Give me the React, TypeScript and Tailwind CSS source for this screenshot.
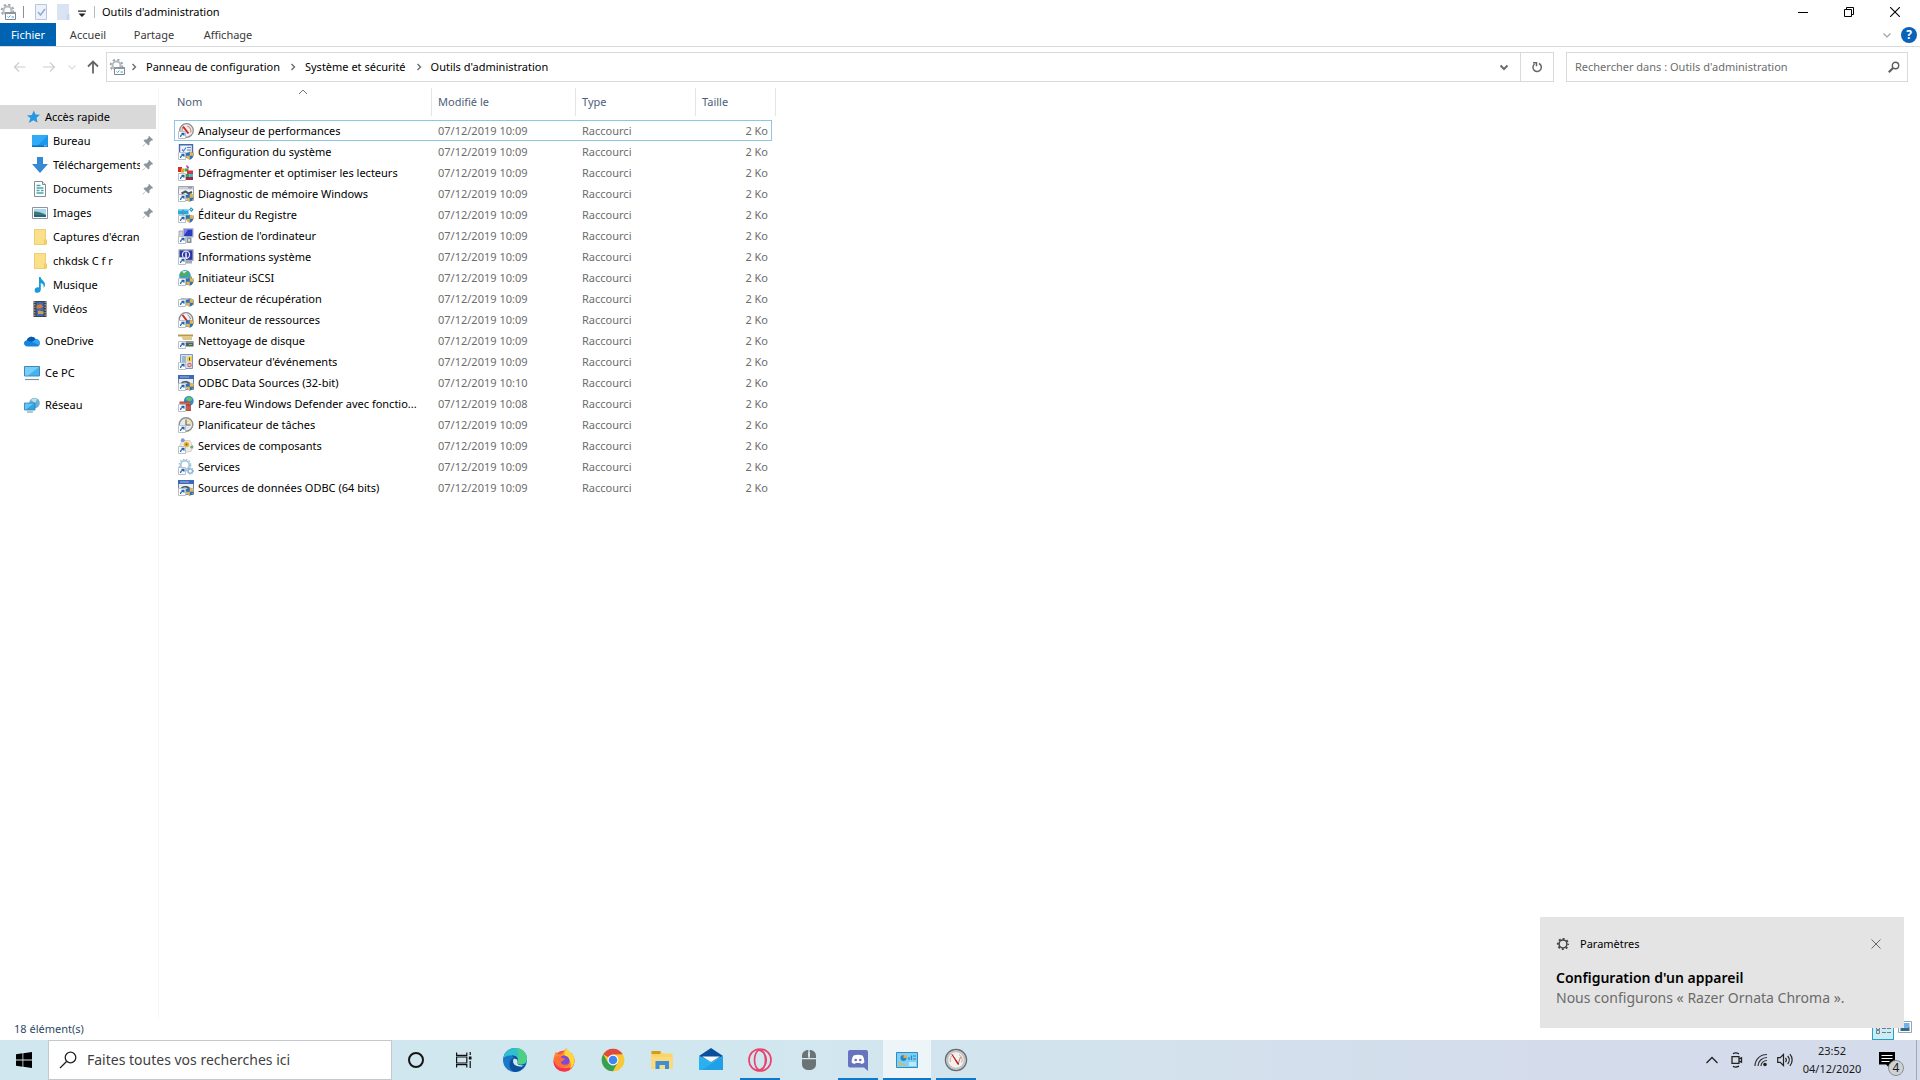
import React from "react";

const ARROW = (
  <g>
    <path d="M.5 8.500h7v7h-7z" fill="#fdfdfd" stroke="#b9c0c8" />
    <path d="M2 14c0-2 1-3 2.600-3H3.500V9.800h3v3h-1.100v-1C4 11.900 3.200 12.700 3.200 14z" fill="#1c5fae" />
  </g>
);

const SHIELD = (
  <g>
    <path d="M11.800 7.500c1 .9 2.400 1.200 4 1.200 0 3.600-1 5.900-4 7-3-1.100-4-3.400-4-7 1.600 0 3-.3 4-1.200z" fill="#2e6fc0" />
    <path d="M11.800 7.500c1 .9 2.400 1.200 4 1.200 0 1.200-.1 2.200-.4 3.100h-3.600z" fill="#e9b748" />
    <path d="M11.800 11.800v3.900c-2-.7-3.200-2-3.700-3.900z" fill="#e9b748" />
  </g>
);

type IconKind =
  | "perf" | "config" | "defrag" | "memory" | "registry" | "computer" | "info" | "iscsi" | "recovery"
  | "monitor" | "clean" | "events" | "odbc" | "firewall" | "tasks" | "components" | "services";

const BODIES: Record<IconKind, React.ReactNode> = {
  perf: (
    <g>
      <circle cx="8.500" cy="7.500" r="6.800" fill="#efeff0" stroke="#8d8f91" strokeWidth="1.300" />
      <path d="M4 8a4.600 4.600 0 0 1 1-3.500M9 3a4.800 4.800 0 0 1 3.500 6.500" fill="none" stroke="#d98c82" strokeWidth="1.200" />
      <path d="M5 3.500l5.500 7" stroke="#cf2a25" strokeWidth="2" />
    </g>
  ),
  config: (
    <g>
      <path d="M1.500.8h13v10.500h-13z" fill="#eef4fc" stroke="#4a68a8" strokeWidth="1.400" />
      <path d="M4 5.500l1.500 1.500L8 3.500M9 3.500h4M9 6h4" fill="none" stroke="#4f82cc" strokeWidth="1.200" />
      <path d="M6 12h5v2H6z" fill="#9aa4ae" />
    </g>
  ),
  defrag: (
    <g>
      <path d="M0 2h4v5H0z" fill="#dc2b2b" /><path d="M3 3.500h3v4H3z" fill="#e8a020" />
      <path d="M8 .3c2 .2 3 1.500 3.200 3L9 3.500z" fill="#c23ab0" /><path d="M6.500 3.500h4v3h-4z" fill="#3ba84a" />
      <path d="M9 5.500h6v3.500H9z" fill="#d82f4a" /><path d="M8 9h3.500v3H8z" fill="#2aa84a" /><path d="M11.500 9H15v3h-3.500z" fill="#35c1cf" /><path d="M8 12h7v3H8z" fill="#a62348" />
    </g>
  ),
  memory: (
    <g>
      <path d="M.5.500h15v14H.5z" fill="#f4f6f8" stroke="#9fa8b1" />
      <path d="M1 1h14v2.500H1z" fill="#c8d0d8" /><path d="M10 1.800h4" stroke="#7d8790" />
      <path d="M3.500 7.500l4-2 3 2 3.500-1.500" stroke="#4a525b" strokeWidth="2" fill="none" />
    </g>
  ),
  registry: (
    <g>
      <path d="M0 2.500h5v5H0zM5.500 2.500h5v5h-5zM5.500 8h5v5h-5z" fill="#28a7d8" />
      <path d="M0 2.500h10.500v1.200H0z" fill="#7fd4ef" /><path d="M13 .2l2.600 2.300L13.500 5 11 2.800z" fill="#1d8ec2" /><circle cx="13.200" cy="2.600" r=".8" fill="#c9eefa" />
      <path d="M4.800 2.500h.7v10h-.7z" fill="#146a93" />
    </g>
  ),
  computer: (
    <g>
      <path d="M1 3h4v9H1z" fill="#cfd4da" stroke="#8b939c" strokeWidth=".7" />
      <path d="M5.500.8h9.500v8H5.500z" fill="#2b3cc4" stroke="#b4bacb" strokeWidth="1.200" />
      <path d="M6.200 1.500H10L6.200 7z" fill="#7d8cf0" /><path d="M8.500 9.500h5V15h-5z" fill="#8b949c" /><path d="M10 11h2v2.500h-2z" fill="#d7dce0" />
    </g>
  ),
  info: (
    <g>
      <path d="M1 .8h14v10.500H1z" fill="#2b35a4" stroke="#a5adba" strokeWidth="1.200" />
      <circle cx="8" cy="5.800" r="3.600" fill="none" stroke="#dfe6fb" strokeWidth="1.200" />
      <path d="M8 3.500v6" stroke="#fff" strokeWidth="1.400" /><path d="M8 12h6v2.500H8z" fill="#a3abb4" />
    </g>
  ),
  iscsi: (
    <g>
      <circle cx="7" cy="6" r="5.900" fill="#3b9bdc" />
      <path d="M1.500 4.500c2-4.500 8-5 10-2L8.500 6 6 5 4 8z" fill="#4fae4d" /><path d="M4 1.500c1.500-.9 3.500-1 5-.6L6 3.500z" fill="#cbeafa" />
      <path d="M8 7.500l6-1v8.500H8z" fill="#93a54e" />
    </g>
  ),
  recovery: <path d="M1 9.500l2-2h10l2.500 2V14H1z" fill="#cdd2d6" stroke="#969da3" strokeWidth=".6" />,
  monitor: (
    <g>
      <circle cx="8" cy="7.500" r="6.800" fill="#f3f3f3" stroke="#858a8f" strokeWidth="1.300" />
      <path d="M4.500 3l5 6.500" stroke="#cf2a25" strokeWidth="2" /><path d="M9.500 3a5 5 0 0 1 3 4" stroke="#888" fill="none" />
    </g>
  ),
  clean: (
    <g>
      <path d="M0 1.500h15v2H0z" fill="#b89a4b" /><path d="M3.500 3.500H14v3.500H5z" fill="#ddc98a" />
      <path d="M6 9h9.500v4.500H6z" fill="#55605c" /><path d="M6 8h9.500v2H6z" fill="#8d9896" /><path d="M11 11h3v1h-3z" fill="#57d263" />
    </g>
  ),
  events: (
    <g>
      <path d="M2.500.5h12v14h-12z" fill="#d5e2f4" stroke="#7f98bd" />
      <path d="M4 3h4M4 5h4M4 7h4M4 9h4" stroke="#6788b8" /><path d="M9 2.500h5v5H9z" fill="#f2cf44" /><path d="M11 3.500h1v3h-1z" fill="#5c4a10" />
      <circle cx="11.500" cy="11" r="2.300" fill="#d56b67" /><path d="M10.500 10l2 2m0-2l-2 2" stroke="#fff" strokeWidth=".7" />
    </g>
  ),
  odbc: (
    <g>
      <path d="M.5.5h15v14H.5z" fill="#e9eef4" stroke="#6d87ab" /><path d="M0 0h16v4H0z" fill="#3d68b5" />
      <path d="M2 1.500h9v1H2z" fill="#9ebbea" />
      <path d="M3 7.500c3-2 7-2 9 .5l-2 1c-2-1.800-4-1.800-6-.3z" fill="#4d565f" />
    </g>
  ),
  firewall: (
    <g>
      <circle cx="10.800" cy="5" r="4.900" fill="#2f8bd0" /><path d="M7.500 3c2-3 6-2.500 7 .5L11.500 6z" fill="#5fc46a" />
      <path d="M1.500 5.500h11V9h-11zM8 9h5v6H8z" fill="#b3473a" /><path d="M1.500 7.200h11M8 11h5M8 13h5" stroke="#e6a398" strokeWidth=".5" />
    </g>
  ),
  tasks: (
    <g>
      <circle cx="8" cy="7.500" r="6.800" fill="#e7e9ec" stroke="#8c9094" strokeWidth="1.400" />
      <path d="M8 7.500V2a5.500 5.500 0 0 1 5.500 5.500z" fill="#f3dfa4" /><path d="M8 2.500v5.500h4.500" stroke="#5d656d" fill="none" strokeWidth="1.100" />
    </g>
  ),
  components: (
    <g>
      <path d="M4 2.500h8l3 6-2 5-7 1-5-5z" fill="#eceae2" stroke="#c5c3b8" strokeWidth=".7" />
      <circle cx="4.800" cy="2.200" r="2" fill="#8a95d8" /><circle cx="8.500" cy="6.500" r="2.700" fill="#eab52c" /><circle cx="8.500" cy="6.500" r="1" fill="#7d5c10" />
      <circle cx="13.800" cy="9" r="1.600" fill="#64b175" />
    </g>
  ),
  services: (
    <g>
      <circle cx="7" cy="6" r="4.300" fill="none" stroke="#9cc3de" strokeWidth="1.600" />
      <circle cx="7" cy="6" r="5.700" fill="none" stroke="#9cc3de" strokeWidth="1.400" strokeDasharray="1.600 1.400" />
      <circle cx="12.300" cy="12" r="2.200" fill="none" stroke="#8cb4d4" strokeWidth="1.300" />
      <circle cx="12.300" cy="12" r="3.300" fill="none" stroke="#8cb4d4" strokeDasharray="1.200 1.200" />
    </g>
  ),
};

const FileIcon = ({ kind, shield }: { kind: IconKind; shield?: boolean }) => (
  <svg viewBox="0 0 16 16" className="h-4 w-4 shrink-0" aria-hidden="true">
    {BODIES[kind]}
    {shield && SHIELD}
    {ARROW}
  </svg>
);

const FILES: { name: string; time?: string; icon: IconKind; shield?: boolean }[] = [
  { name: "Analyseur de performances", icon: "perf" },
  { name: "Configuration du système", icon: "config", shield: true },
  { name: "Défragmenter et optimiser les lecteurs", icon: "defrag" },
  { name: "Diagnostic de mémoire Windows", icon: "memory", shield: true },
  { name: "Éditeur du Registre", icon: "registry", shield: true },
  { name: "Gestion de l'ordinateur", icon: "computer" },
  { name: "Informations système", icon: "info" },
  { name: "Initiateur iSCSI", icon: "iscsi", shield: true },
  { name: "Lecteur de récupération", icon: "recovery", shield: true },
  { name: "Moniteur de ressources", icon: "monitor", shield: true },
  { name: "Nettoyage de disque", icon: "clean" },
  { name: "Observateur d'événements", icon: "events" },
  { name: "ODBC Data Sources (32-bit)", time: "10:10", icon: "odbc", shield: true },
  { name: "Pare-feu Windows Defender avec fonctio...", time: "10:08", icon: "firewall" },
  { name: "Planificateur de tâches", icon: "tasks" },
  { name: "Services de composants", icon: "components" },
  { name: "Services", icon: "services" },
  { name: "Sources de données ODBC (64 bits)", icon: "odbc", shield: true },
];

const AdminIcon = () => (
  <svg viewBox="0 0 16 16" className="h-4 w-4 shrink-0" aria-hidden="true">
    <circle cx="7.500" cy="6.500" r="4" fill="none" stroke="#b4babf" strokeWidth="2" />
    <circle cx="7.500" cy="6.500" r="5.900" fill="none" stroke="#9da4aa" strokeWidth="1.800" strokeDasharray="2.300 2.330" />
    <path d="M5.500 8.500h10v7h-10z" fill="#fff" stroke="#7e868d" />
    <path d="M5 8h11v2H5z" fill="#8e969d" />
    <path d="M7.500 12.500l1 1L10.500 11.500M11.500 13h2.500" fill="none" stroke="#3d9fd8" />
  </svg>
);

const Pin = () => (
  <svg viewBox="0 0 12 12" className="h-3 w-3 shrink-0" aria-hidden="true">
    <path d="M7 .8L11.200 5l-1.100.6-.7-.2-2 2 .1 2L6.400 10.500 4 8.100.8 11.400l-.3-.3L3.800 7.900 1.500 5.600l1.100-1.100 2 .1 2-2-.2-.7z" fill="#8b959d" />
  </svg>
);

const Folder = () => (
  <svg viewBox="0 0 16 16" className="h-4 w-4" aria-hidden="true">
    <path d="M2 0h12v16H2z" fill="#fbe08c" /><path d="M2.500.500h11v15h-11z" fill="none" stroke="#ecce74" />
    <path d="M12 10.500h3v5h-3z" fill="#f0cd66" />
  </svg>
);

const NAV_ICONS: Record<string, React.ReactNode> = {
  desktop: <g><path d="M0 2h16v12H0z" fill="#1a97ec" /><path d="M0 2h16L4 14H0z" fill="#31abf8" /><path d="M0 12.500h16V14H0z" fill="#0b6dc0" /><path d="M12 12.500h3v.8h-3z" fill="#bfe2fb" /></g>,
  download: <path d="M5 0h6v7h5l-8 9-8-9h5z" fill="#3489d4" />,
  documents: <g><path d="M2.500.5h8l3 3v12h-11z" fill="#fff" stroke="#848b91" /><path d="M10.500.5v3h3" fill="#dfe4e8" stroke="#848b91" /><path d="M4.500 4.500h4M4.500 7h7M4.500 9.500h3M9 9.500h2.500M4.500 12h7" stroke="#46a5ad" strokeWidth="1.400" /></g>,
  pictures: <g><path d="M.5 2.500h15v11H.5z" fill="#fff" stroke="#8d959b" /><path d="M2 4h12v8H2z" fill="#a9d6f2" /><path d="M2 6.500c5 0 8 1.500 12 3.500v2H2z" fill="#3c7c66" /><path d="M2 10h12v2H2z" fill="#295f93" /></g>,
  music: <path d="M7 0h1.600c.3 3 4.400 4 4.400 7.500 0 1.400-.6 2.500-1.500 3.500.7-3-.6-4.200-2.700-4.900V12.500c0 2-1.500 3.300-3.400 3.300S2.600 14.800 2.600 13.200 4.100 10.300 5.900 10.300c.4 0 .8.100 1.100.2z" fill="#199bd8" />,
  video: <g><path d="M1.500 0h13v16h-13z" fill="#3c3f43" /><path d="M2.800.5v15M13.200.5v15" stroke="#a4a8ac" strokeWidth="1.200" strokeDasharray="1.400 1.200" /><path d="M4.500 1h7v14h-7z" fill="#3c6ab8" /><path d="M4.500 4.500l4-1.500 3 2.500-3 2h-4z" fill="#d8783a" /><path d="M6 9.500l5.500 1v2.500H6z" fill="#d3a14a" /></g>,
  onedrive: <g><path d="M4 13.500c-5 0-5.200-5.500-1.200-6.200C4 3 9.500 2.500 11.500 6c4.300 0 5.800 5.500 2.200 7.500z" fill="#1684dc" /><path d="M2.800 7.300C4 3 9.500 2.500 11.500 6L8 9z" fill="#0b59ab" /><path d="M8 9l4.500-3c3 .3 4.400 3.500 2.800 6z" fill="#35a5ee" /></g>,
  pc: <g><path d="M.5 1.500h15v9.500H.5z" fill="#45b3ee" stroke="#3b88bd" /><path d="M1 2h14L4 10.500H1z" fill="#79cdf6" /><path d="M1 14.500h14" stroke="#7d96a8" strokeWidth="1.200" /></g>,
  network: <g><circle cx="10.500" cy="6" r="5.300" fill="#6faed3" /><path d="M7 3c2-2 5-2 6-.5L11 6z" fill="#bcdff0" /><path d="M.5 6h10.500v7H.5z" fill="#2fa2e4" stroke="#2b83bb" strokeWidth=".8" /><path d="M1 6.500h9l-8 6H1z" fill="#64c3f3" /><path d="M3 15h6" stroke="#6f8a9b" /></g>,
  star: <path d="M8.800 1.500l1.700 4 4.500.2-3.400 3 .9 5-4.100-2.500-4.600 2.800 1.600-5L1.800 6.500l5-.6z" fill="#2598e4" />,
};

const NavIcon = ({ name }: { name: string }) =>
  name === "folder" ? <Folder /> : (
    <svg viewBox="0 0 16 16" className="h-4 w-4" aria-hidden="true">{NAV_ICONS[name]}</svg>
  );

const QUICK = [
  { label: "Bureau", icon: "desktop", pinned: true },
  { label: "Téléchargements", icon: "download", pinned: true },
  { label: "Documents", icon: "documents", pinned: true },
  { label: "Images", icon: "pictures", pinned: true },
  { label: "Captures d'écran", icon: "folder" },
  { label: "chkdsk C f r", icon: "folder" },
  { label: "Musique", icon: "music" },
  { label: "Vidéos", icon: "video" },
];

const ROOTS = [
  { label: "OneDrive", icon: "onedrive" },
  { label: "Ce PC", icon: "pc" },
  { label: "Réseau", icon: "network" },
];

const Chevron = ({ d, color = "#6b6b6b", w = 2 }: { d: "right" | "down" | "up"; color?: string; w?: number }) => (
  <svg viewBox="0 0 10 10" className="h-2.5 w-2.5 shrink-0" aria-hidden="true" fill="none" stroke={color} strokeWidth={w}>
    <path d={d === "right" ? "M3.500 2l3 3-3 3" : d === "down" ? "M1.500 3.500L5 7l3.500-3.500" : "M1 6l4-4 4 4"} />
  </svg>
);

const TitleBar = () => (
  <header className="flex h-[23px] items-center">
    <AdminIcon />
    <span className="ml-[7px] h-3 w-px bg-[#8f8f8f]" />
    <button aria-label="Propriétés" className="ml-2.5 h-4 w-3.5">
      <svg viewBox="0 0 14 16" className="h-4 w-3.5"><path d="M1.500.5h11v15h-11z" fill="#edf2fa" stroke="#b7c6dc" /><path d="M4 8l2.500 3L11 5" fill="none" stroke="#92aed6" strokeWidth="1.600" /></svg>
    </button>
    <button aria-label="Nouveau dossier" className="ml-2 h-4 w-3.5">
      <svg viewBox="0 0 14 16" className="h-4 w-3.5"><path d="M1 0h12v16H1z" fill="#d9e3f3" /><path d="M10.500 10h3v6h-3z" fill="#c9d7ec" /></svg>
    </button>
    <button aria-label="Personnaliser la barre d'outils" className="ml-2 h-4 w-2">
      <svg viewBox="0 0 8 16" className="h-4 w-2"><path d="M0 6.500h8v1.200H0zM.5 9.500h7L4 13z" fill="#222" /></svg>
    </button>
    <span className="ml-2 h-3 w-px bg-[#b9b9b9]" />
    <h1 className="ml-[7px] text-black">Outils d'administration</h1>
    <div className="ml-auto mr-0.5 flex">
      <button aria-label="Réduire" className="flex h-5 w-[46px] items-center justify-center"><svg viewBox="0 0 10 10" className="h-2.5 w-2.5"><path d="M0 5h10v1H0z" fill="#000" /></svg></button>
      <button aria-label="Restaurer" className="flex h-5 w-[46px] items-center justify-center"><svg viewBox="0 0 10 10" className="h-2.5 w-2.5" fill="none" stroke="#000"><path d="M.5 2.500h7v7h-7zM2.500 2.500v-2h7v7h-2" /></svg></button>
      <button aria-label="Fermer" className="flex h-5 w-[46px] items-center justify-center"><svg viewBox="0 0 10 10" className="h-2.5 w-2.5" stroke="#000" strokeWidth="1.100"><path d="M0 0l10 10M10 0L0 10" /></svg></button>
    </div>
  </header>
);

const Ribbon = () => (
  <nav className="flex h-6 items-stretch border-b border-[#dadbdc] text-[#3a3a3a]">
    <button className="w-14 bg-[#0063b1] text-white">Fichier</button>
    <button className="w-16">Accueil</button>
    <button className="ml-0.5 w-16">Partage</button>
    <button className="ml-2 w-[68px]">Affichage</button>
    <div className="ml-auto flex items-center gap-[9px] pr-[3px]">
      <button aria-label="Développer le ruban"><Chevron d="down" color="#a0a0a0" w={1.2} /></button>
      <button aria-label="Aide" className="flex h-4 w-4 items-center justify-center rounded-full bg-[#0a63b8] text-xs font-bold text-white">?</button>
    </div>
  </nav>
);

const AddressBar = () => (
  <div className="flex h-[41px] items-center pb-px pr-3 text-black">
    <button aria-label="Précédent" className="ml-[13px]"><svg viewBox="0 0 14 12" className="h-3 w-3.5" fill="none" stroke="#cdcdcd" strokeWidth="1.200"><path d="M12.500 6H1.500M6 1.500L1.500 6 6 10.500" /></svg></button>
    <button aria-label="Suivant" className="ml-4"><svg viewBox="0 0 14 12" className="h-3 w-3.5" fill="none" stroke="#cdcdcd" strokeWidth="1.200"><path d="M0 6h11.500M7 1.500L11.500 6 7 10.500" /></svg></button>
    <button aria-label="Emplacements récents" className="ml-2.5"><Chevron d="down" color="#dcdcdc" w={1.2} /></button>
    <button aria-label="Remonter" className="ml-[9px]"><svg viewBox="0 0 14 14" className="h-3.5 w-3.5" fill="none" stroke="#666" strokeWidth="1.800"><path d="M7 13.500V2M2 6.500l5-5 5 5" /></svg></button>
    <div className="ml-1.5 flex h-[30px] flex-1 items-center border border-[#d9d9d9] pl-0.5">
      <AdminIcon />
      <span className="ml-1"><Chevron d="right" w={1.4} /></span>
      <a href="#panneau" className="ml-[7px]">Panneau de configuration</a>
      <span className="ml-2"><Chevron d="right" w={1.4} /></span>
      <a href="#systeme" className="ml-[7px]">Système et sécurité</a>
      <span className="ml-2"><Chevron d="right" w={1.4} /></span>
      <a href="#outils" className="ml-[7px]">Outils d'administration</a>
      <button aria-label="Emplacements précédents" className="ml-auto flex w-8 items-center justify-center"><Chevron d="down" /></button>
      <button aria-label="Actualiser" className="flex h-full w-[33px] items-center justify-center border-l border-[#d9d9d9]">
        <svg viewBox="0 0 12 12" className="h-3 w-3" fill="none" stroke="#666" strokeWidth="1.500"><path d="M8 2.500A4.200 4.200 0 1 1 3.500 3M2 1.700h3.500v3.500" /></svg>
      </button>
    </div>
    <label className="ml-3 flex h-[30px] w-[342px] items-center border border-[#d9d9d9] pl-2 pr-[7px]">
      <input aria-label="Rechercher" placeholder="Rechercher dans : Outils d'administration" className="min-w-0 flex-1 outline-none placeholder:text-[#6d6d6d]" />
      <svg viewBox="0 0 12 12" className="h-3 w-3" fill="none" stroke="#5c5c5c"><circle cx="7.500" cy="4.500" r="3.200" strokeWidth="1.400" /><path d="M5 7L.8 11.200" strokeWidth="2" /></svg>
    </label>
  </div>
);

const NavPane = () => (
  <aside className="w-[159px] shrink-0 border-r border-[#f6f6f6] pr-0.5 pt-[17px] text-black">
    <button className="flex h-6 w-full items-center gap-1 bg-[#d9d9d9] pl-[25px] text-left"><NavIcon name="star" />Accès rapide</button>
    {QUICK.map((q) => (
      <button key={q.label} className="flex h-6 w-full items-center pl-8 pr-0.5 text-left">
        <span className="w-[21px] shrink-0"><NavIcon name={q.icon} /></span>
        <span className="min-w-0 flex-1 overflow-hidden whitespace-nowrap">{q.label}</span>
        {q.pinned && <span className="pl-0.5"><Pin /></span>}
      </button>
    ))}
    {ROOTS.map((r) => (
      <button key={r.label} className="mt-2 flex h-6 w-full items-center gap-[5px] pl-6 text-left"><NavIcon name={r.icon} />{r.label}</button>
    ))}
  </aside>
);

const FileTable = () => (
  <main className="min-w-0 flex-1 pl-[15px]">
    <table className="w-[602px] table-fixed border-separate border-spacing-0 text-left">
      <colgroup>
        <col className="w-[258px]" /><col className="w-36" /><col className="w-[120px]" /><col className="w-[76px]" /><col className="w-1" />
      </colgroup>
      <thead className="text-[#4c607a]">
        <tr className="h-7">
          <th className="relative border-r border-[#e5e5e5] pl-[3px] font-normal">
            Nom
            <span className="absolute left-1/2 top-0 -translate-x-1/2"><Chevron d="up" color="#777" w={1} /></span>
          </th>
          <th className="border-r border-[#e5e5e5] pl-1.5 font-normal">Modifié le</th>
          <th className="border-r border-[#e5e5e5] pl-1.5 font-normal">Type</th>
          <th colSpan={2} className="border-r border-[#e5e5e5] pl-1.5 font-normal">Taille</th>
        </tr>
        <tr className="h-1" aria-hidden="true"><td colSpan={5} /></tr>
      </thead>
      <tbody className="text-[#6d6d6d]">
        {FILES.map((f, i) => {
          const line = i === 0 ? "border-y border-[#8cc8e6]" : "";
          return (
            <tr key={f.name} className="h-[21px]">
              <td className={`${line} ${i === 0 ? "border-l pl-[3px]" : "pl-1"} text-black`}>
                <div className="flex items-center gap-1 overflow-hidden whitespace-nowrap"><FileIcon kind={f.icon} shield={f.shield} />{f.name}</div>
              </td>
              <td className={`${line} pl-1.5`}>07/12/2019 {f.time ?? "10:09"}</td>
              <td className={`${line} pl-1.5`}>Raccourci</td>
              <td className={`${line} ${i === 0 ? "border-r pr-[3px]" : "pr-1"} text-right`}>2 Ko</td>
              <td />
            </tr>
          );
        })}
      </tbody>
    </table>
  </main>
);

const Toast = () => (
  <section aria-label="Notification" className="absolute bottom-[52px] right-4 h-[111px] w-[364px] bg-[#e4e4e4] px-4 pt-[19px] text-black">
    <div className="flex h-4 items-center">
      <svg viewBox="0 0 14 14" className="h-3.5 w-3.5" fill="none" stroke="#444"><circle cx="7" cy="7" r="3.900" strokeWidth="1.500" /><circle cx="7" cy="7" r="5.200" strokeWidth="1.800" strokeDasharray="2 2.084" strokeDashoffset="1" /></svg>
      <span className="ml-2.5">Paramètres</span>
      <button aria-label="Ignorer" className="ml-auto mr-[7px]"><svg viewBox="0 0 10 10" className="h-2.5 w-2.5" stroke="#666"><path d="M.5.5l9 9M9.500.5l-9 9" /></svg></button>
    </div>
    <h2 className="mt-4 text-sm/5 font-semibold">Configuration d'un appareil</h2>
    <p className="text-sm/5 text-[#6b6b6b]">Nous configurons « Razer Ornata Chroma ».</p>
  </section>
);

const StatusBar = () => (
  <footer className="flex h-[22px] items-center pl-3.5 pr-2 text-[#2f4868]">
    <span>18 élément(s)</span>
    <div className="ml-auto flex items-end gap-1">
      <button aria-label="Détails" className="h-[22px] w-[22px] border border-[#26a0c6] bg-[#cdebf5]">
        <svg viewBox="0 0 20 20" className="h-5 w-5" stroke="#6f7f88" fill="none"><path d="M3.500 7.500h3v3h-3zM3.500 11.500h3v3h-3zM9 9.500h4M14 9.500h4M9 13.500h4M14 13.500h4" /></svg>
      </button>
      <button aria-label="Grandes icônes" className="mb-1.5 h-3.5 w-3.5">
        <svg viewBox="0 0 14 14" className="h-3.5 w-3.5"><path d="M.5 1.500h13v11H.5z" fill="#fff" stroke="#9aa3aa" /><path d="M2.500 3h9v4h-9z" fill="#6db2ee" /><path d="M2.500 7.500c4-1 5 1 9-.5v4h-9z" fill="#2f6b8d" /></svg>
      </button>
    </div>
  </footer>
);

const APPS: { name: string; running?: boolean; active?: boolean; art: React.ReactNode }[] = [
  { name: "Microsoft Edge", art: (
    <g>
      <circle cx="12" cy="12" r="12" fill="#1a78c8" />
      <path d="M.3 10C1.500 4 6.500 0 12.300 0 19 0 24 4.800 24 10.500c0 4-3 6.200-6 6.200-2.600 0-4.200-1-4.200-2.200 0-.8 1-1 1-2.700 0-2.200-2-4.400-5.800-4.400C5 7.400 1.500 8.500.3 10z" fill="#2fbfcf" />
      <path d="M12.300 0C19 0 24 4.800 24 10.500c0 4-3 6.200-6 6.200-2.600 0-4.200-1-4.200-2.200 0-.8 1-1 1-2.700C14.800 7 17 3 12.300 0z" fill="#4ccf86" />
      <path d="M9 7.400c3.800 0 5.800 2.200 5.800 4.400 0 1.700-1 1.900-1 2.700 0 1.200 1.600 2.200 4.200 2.200 1.800 0 3.600-.7 4.600-1.700C21 20.500 16.500 24 12 24 9 23.500 6.500 20.500 6.500 16.500c0-4 2-6 4.500-7z" fill="#0d4f9c" />
      <path d="M11 10.500c-1.500 1.500-2.400 8 7.500 8.200l3-1.700c-1 .8-6 .8-7.200-1.500-.8-1.400.8-2-.2-4z" fill="#d1e7ef" />
    </g>) },
  { name: "Firefox", art: (
    <g>
      <circle cx="12" cy="13" r="10.500" fill="#ff4a48" />
      <path d="M1.500 13C1.500 8.500 3 5.500 4 3.500l2 3 3-.5c2-1 3-3 5.500-6 .5 3 5 4 7 8 3 6-1 15.500-9.500 15.500z" fill="#ff8a2a" />
      <path d="M1.500 13C1.500 19 6 23.500 12 23.500c4 0 7-2 8.500-5C15 21 8 21 5 16z" fill="#f5324f" />
      <path d="M14.500 0c.5 3 5 4 7 8 2 4.500.5 10-3.500 13 2-5 .5-10-3.500-12-2-1-2.500-3-2-5z" fill="#ffd93a" />
      <circle cx="12" cy="13" r="5.500" fill="#8048d8" />
      <path d="M3 9c3-2 5.500-1 7 1 1.500.2 2.500.5 3 1.500-2 .5-2 2-4 2.200-.5 3 4 4 7 2-1.500 4-7.500 5.500-11 2S1.500 11 3 9z" fill="#ff7038" />
    </g>) },
  { name: "Google Chrome", art: (
    <g>
      <circle cx="12" cy="12" r="11.300" fill="#f7c934" />
      <path d="M12 12L2.200 6.300A11.300 11.300 0 0 1 21.800 6.300L12 6.500z" fill="#dd4b3e" />
      <path d="M2.200 6.300L7.300 15 12 17.500l-3 5.400A11.300 11.300 0 0 1 2.200 6.300z" fill="#36a156" />
      <path d="M7.100 14.800L12 12l4.800 2.800L12 23.300A11 11 0 0 1 8 22.600z" fill="#36a156" />
      <path d="M16.800 14.800L12 23.300c6 0 11.300-4.800 11.300-11.300L17 12z" fill="#f7c934" />
      <circle cx="12" cy="12" r="5.400" fill="#fff" /><circle cx="12" cy="12" r="4.300" fill="#4285f0" />
    </g>) },
  { name: "Explorateur de fichiers", art: (
    <g>
      <path d="M1.500 3h9l2 2.500h10V21H1.500z" fill="#fbd468" /><path d="M1.500 3h9v3h-9z" fill="#d69b14" />
      <path d="M1.500 9h21v12h-21z" fill="#fcd97a" /><path d="M5.500 13h13.500v8h-4v-4h-5.500v4h-4z" fill="#3b8fd6" />
    </g>) },
  { name: "Courrier", art: (
    <g>
      <path d="M0 8l12-8 12 8-12 6z" fill="#0a4f9e" />
      <path d="M0 8l12 6 12-6v14H0z" fill="#29b0ee" /><path d="M3 8.500h18L12 14z" fill="#f4f8fb" /><path d="M24 8v14H3z" fill="#1c96e0" opacity=".6" />
    </g>) },
  { name: "Opera GX", running: true, art: (
    <g fill="none" stroke="#e8446e"><circle cx="12" cy="12" r="11" strokeWidth="1.700" /><ellipse cx="12" cy="12" rx="5.500" ry="10" strokeWidth="1.700" /><path d="M8.500 2C15 2 18.500 7 18.500 12s-3.500 10-10 10" strokeWidth="1.300" /></g>) },
  { name: "Souris", art: (
    <g fill="#6c7375"><path d="M11.300 2v8H5V8c0-3.500 2.500-6 6.300-6zM12.700 2v8H19V8c0-3.500-2.500-6-6.300-6z" /><path d="M5 11.300h14V16c0 4-3 6-7 6s-7-2-7-6z" /><path d="M11 4.500h2v4h-2z" fill="#d1e4ed" /></g>) },
  { name: "Discord", running: true, art: (
    <g><path d="M4 2h16a2 2 0 0 1 2 2v19l-4-3.500H4a2 2 0 0 1-2-2V4a2 2 0 0 1 2-2z" fill="#6673bd" /><path d="M7.500 7.500c3-1 6-1 9 0 1.300 2 2 4.500 1.800 7-1.300 1-2 1.300-3.300 1.500l-.8-1.300c-1.500.3-2.900.3-4.400 0L9 16c-1.300-.2-2-.5-3.300-1.500-.2-2.500.5-5 1.800-7z" fill="#fff" /><circle cx="9.700" cy="12" r="1.300" fill="#6673bd" /><circle cx="14.300" cy="12" r="1.300" fill="#6673bd" /></g>) },
  { name: "Panneau de configuration", running: true, active: true, art: (
    <g><path d="M1.500 4.500h21v15h-21z" fill="#7fd0f3" stroke="#2a8dcb" /><circle cx="8.500" cy="10" r="3" fill="#2586c7" /><path d="M8.500 10V6.500A3.500 3.500 0 0 1 12 10z" fill="#f3a63a" /><path d="M14 12V9M16.500 12V7.500" stroke="#2586c7" strokeWidth="1.200" /><path d="M18 8h3M18 11h3" stroke="#2586c7" /><path d="M14 15h7M14 17h7" stroke="#fff" /><path d="M3 17h8M3 15h4" stroke="#eab33d" strokeWidth="1.200" /></g>) },
  { name: "Analyseur de performances", running: true, art: (
    <g><circle cx="12" cy="12" r="10.500" fill="#f3f1ee" stroke="#66696b" strokeWidth="1.400" /><circle cx="12" cy="12" r="8.800" fill="none" stroke="#bfc1c2" strokeWidth="2" /><path d="M6.500 14a6 6 0 0 1 3-7.500M15 6.500a6 6 0 0 1 2.500 8" fill="none" stroke="#d9a39b" /><path d="M8 6.500l6 10 .8-.5z" fill="#c3241f" stroke="#c3241f" /><path d="M14.500 15l2-6" stroke="#a5837f" /></g>) },
];

const Taskbar = () => (
  <nav aria-label="Barre des tâches" className="flex h-10 items-stretch bg-linear-to-r from-[#d1e7ef] from-40% to-[#d4dceb] to-80% text-[#1a1a1a]">
    <button aria-label="Démarrer" className="flex w-12 items-center justify-center">
      <svg viewBox="0 0 16 16" className="h-4 w-4" fill="#000"><path d="M0 2.200l6.500-.9v6.300H0zM7.300 1.200L16 0v7.600H7.300zM0 8.400h6.500v6.300L0 13.800zM7.300 8.400H16V16l-8.700-1.200z" /></svg>
    </button>
    <label className="flex w-[344px] items-center border border-[#c3c9cc] bg-white pl-2.5">
      <svg viewBox="0 0 18 18" className="h-[18px] w-[18px]" fill="none" stroke="#222" strokeWidth="1.300"><circle cx="11.500" cy="6.500" r="5.300" /><path d="M7.800 10.200L1 17" /></svg>
      <input aria-label="Rechercher" placeholder="Faites toutes vos recherches ici" className="ml-2.5 min-w-0 flex-1 text-sm outline-none placeholder:text-[#3f3f3f]" />
    </label>
    <button aria-label="Cortana" className="flex w-12 items-center justify-center"><span className="h-4 w-4 rounded-full border-2 border-[#151515]" /></button>
    <button aria-label="Affichage des tâches" className="mr-[3px] flex w-12 items-center justify-center">
      <svg viewBox="0 0 16 16" className="h-4 w-4" fill="none" stroke="#111" strokeWidth="1.200"><path d="M.6.500v2.900h10.200V.5M.6 5h10.200v6H.6zM.6 15.500v-2.900h10.200v2.900M14.200 0v3M14.200 9v7" /><path d="M12.800 4.500h2.700v3h-2.700z" fill="#111" stroke="none" /></svg>
    </button>
    <div className="flex gap-px">
      {APPS.map((a) => (
        <button key={a.name} aria-label={a.name} className={`relative flex w-12 items-center justify-center ${a.active ? "bg-[#eef5f9]" : ""}`}>
          <svg viewBox="0 0 24 24" className="h-6 w-6" aria-hidden="true">{a.art}</svg>
          {a.running && <span className={`absolute bottom-0 h-0.5 bg-[#0f78c8] ${a.active ? "inset-x-0" : "inset-x-1"}`} />}
        </button>
      ))}
    </div>
    <div className="ml-auto flex items-center">
      <button aria-label="Icônes cachées" className="flex w-6 justify-center"><svg viewBox="0 0 12 12" className="h-3 w-3" fill="none" stroke="#222" strokeWidth="1.300"><path d="M.5 9L6 3.500 11.500 9" /></svg></button>
      <button aria-label="Réunion" className="flex w-[25px] justify-center"><svg viewBox="0 0 14 16" className="h-4 w-3.5" fill="none" stroke="#222" strokeWidth="1.300"><path d="M2 4.700h7v6.600H2zM9 7l2.500-1.200v4.400L9 9M3 1.800c1.500-1 4-1 6 0M3 14.200c1.500 1 4 1 6 0" /></svg></button>
      <button aria-label="Réseau" className="flex w-6 justify-center"><svg viewBox="0 0 14 14" className="h-3.5 w-3.5" fill="none" stroke="#333" strokeWidth="1.200"><path d="M1 13C1 6.500 6 1.500 13 1.500M4 13c0-4.700 4-8.500 9-8.500M7 13c0-3 2.600-5.500 6-5.500" /><circle cx="11" cy="11.500" r="1.800" fill="#222" stroke="none" /></svg></button>
      <button aria-label="Volume" className="flex w-6 justify-center"><svg viewBox="0 0 16 14" className="h-3.5 w-4" fill="none" stroke="#222" strokeWidth="1.200"><path d="M.7 4.700h2.500L6.500 1.500v11L3.200 9.300H.7zM8.500 4.800c1 1.300 1 3.100 0 4.400M10.700 3c2 2.300 2 5.700 0 8M12.900 1.200c3 3.400 3 8.200 0 11.600" /></svg></button>
      <time className="w-[70px] text-center leading-[18px]" dateTime="2020-12-04T23:52">23:52<br />04/12/2020</time>
      <button aria-label="Centre de notifications, 4" className="relative flex w-[45px] items-center justify-center self-stretch">
        <svg viewBox="0 0 16 16" className="mr-1.5 h-4 w-4"><path d="M0 0h16v12.500h-6v3L7 12.500H0z" fill="#000" /><path d="M2.500 3.500h11M2.500 6.500h11M2.500 9.500h8" stroke="#fff" strokeWidth="1.200" /></svg>
        <span className="absolute bottom-1 right-2 flex h-4 w-4 items-center justify-center rounded-full border border-[#8a8d90] bg-[#cfd2d4] text-xs">4</span>
      </button>
      <button aria-label="Afficher le bureau" className="ml-1 h-full w-1 border-l border-[#9fa8b5]" />
    </div>
  </nav>
);

export default function App() {
  return (
    <div className="relative flex h-screen flex-col overflow-hidden bg-white font-['Noto_Sans','Open_Sans',sans-serif] text-[11px]/4">
      <TitleBar />
      <Ribbon />
      <AddressBar />
      <div className="flex min-h-0 flex-1">
        <NavPane />
        <FileTable />
      </div>
      <StatusBar />
      <Taskbar />
      <Toast />
    </div>
  );
}
